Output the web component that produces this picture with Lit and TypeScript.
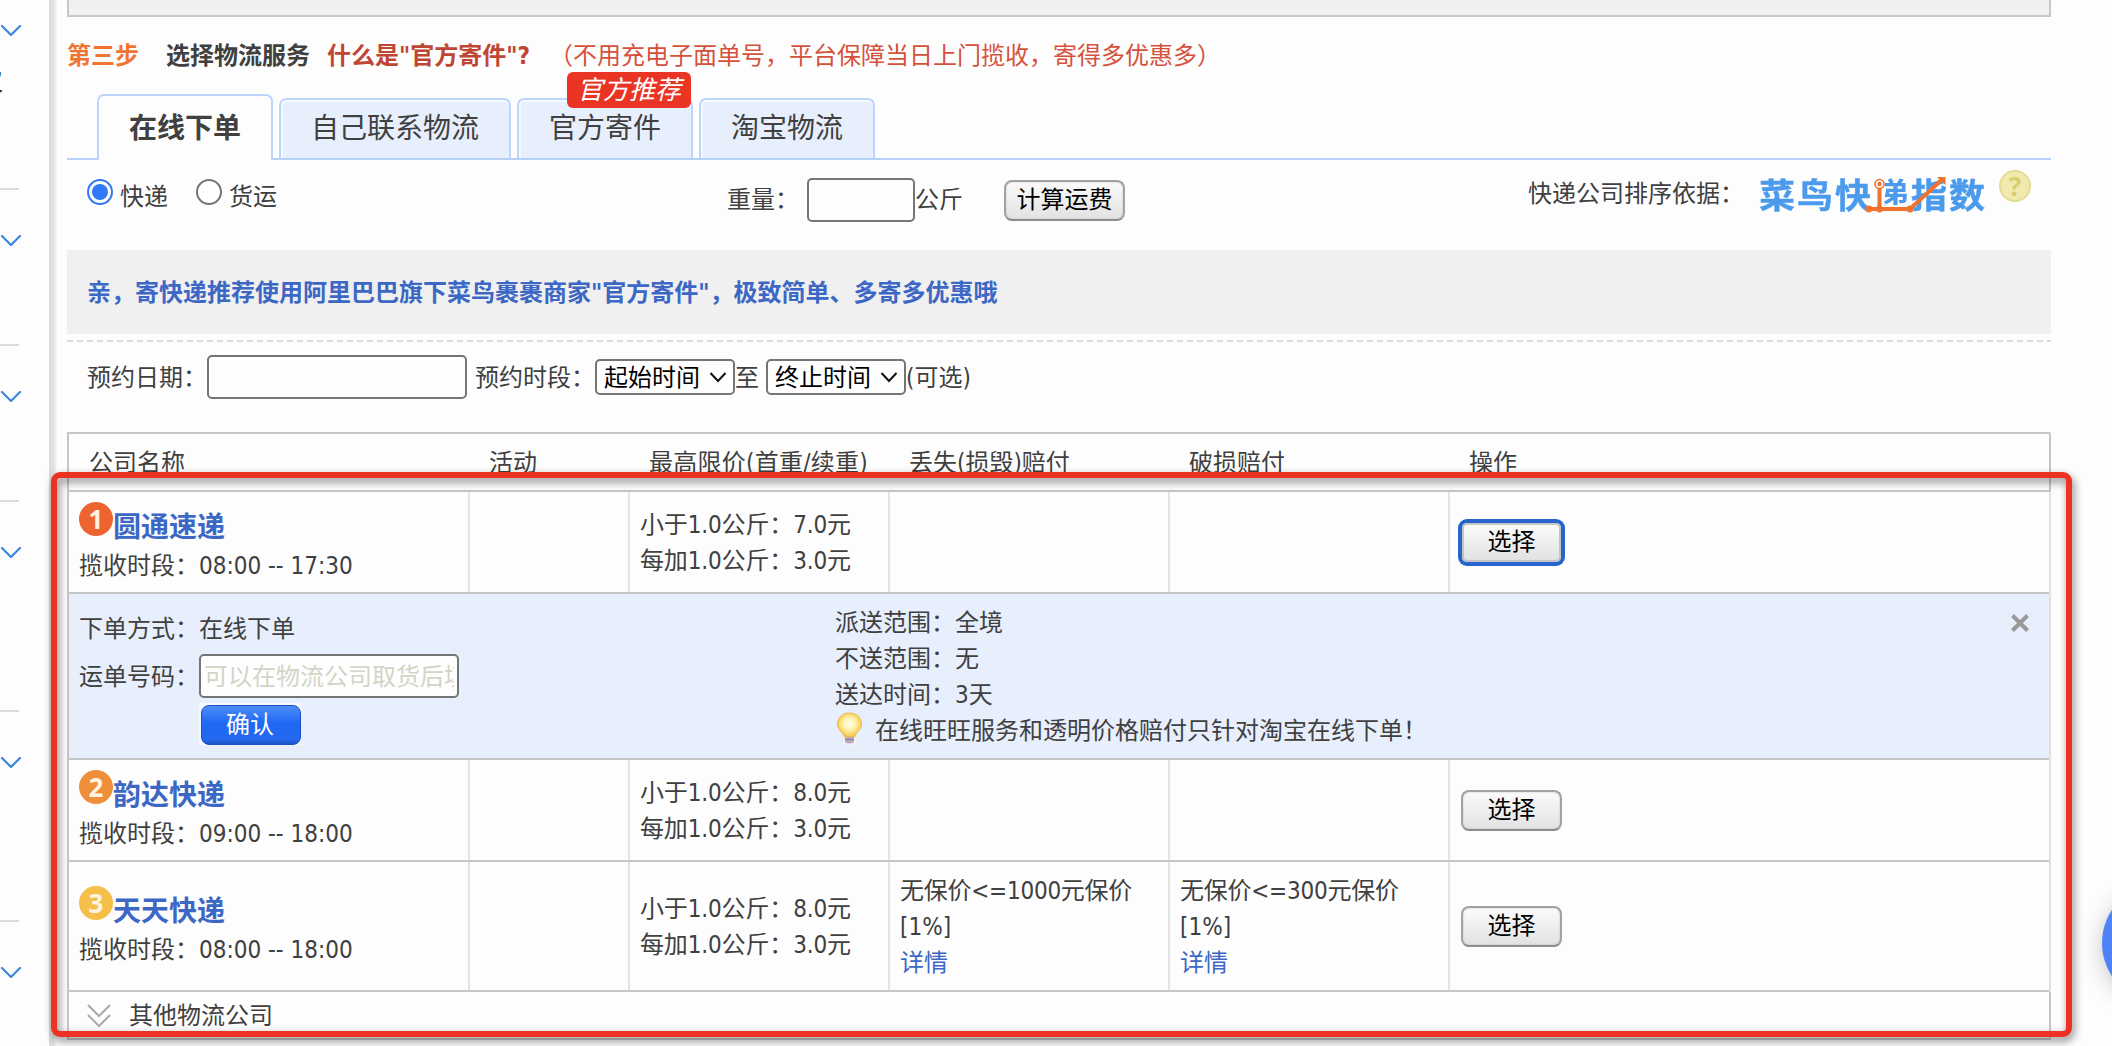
import { LitElement, html, css, svg, nothing } from "lit";
import { customElement, property } from "lit/decorators.js";
import { classMap } from "lit/directives/class-map.js";

interface Carrier {
  rank: number;
  name: string;
  hours: string;
  first: string;
  extra: string;
  lost?: string;
  broken?: string;
  open?: boolean;
}

const CARRIERS: Carrier[] = [
  { rank: 1, name: "圆通速递", hours: "08:00 -- 17:30", first: "7.0", extra: "3.0", open: true },
  { rank: 2, name: "韵达快递", hours: "09:00 -- 18:00", first: "8.0", extra: "3.0" },
  { rank: 3, name: "天天快递", hours: "08:00 -- 18:00", first: "8.0", extra: "3.0", lost: "无保价<=1000元保价", broken: "无保价<=300元保价" },
];

const baseText = css`
  :host {
    font-family: "DejaVu Sans Condensed", "DejaVu Sans", "Noto Sans CJK SC", sans-serif;
    font-stretch: condensed;
    font-size: 24px;
    line-height: 36px;
    color: #404040;
  }
  * { box-sizing: border-box; }
  .btn {
    font: inherit;
    height: 41px;
    line-height: 37px;
    padding: 0;
    color: #000;
    text-align: center;
    border: 2px solid #a2a2a2;
    border-bottom-color: #8c8c8c;
    border-radius: 8px;
    background: linear-gradient(#fbfbfb, #e2e2e2);
    box-shadow: inset 0 0 2px #bbb;
  }
  .field {
    font: inherit;
    height: 44px;
    padding: 2px 3px 0;
    border: 2px solid #757575;
    border-radius: 5px;
    background: #fefefe;
    outline: none;
  }
`;

@customElement("side-menu")
export class SideMenu extends LitElement {
  static styles = [baseText, css`
    :host { display: block; width: 49px; overflow: hidden; }
    .item { width: 19px; border-bottom: 2px solid #dcdcdc; padding-top: 45px; height: 156px; }
    .item.first { height: 190px; padding-top: 25px; }
    .item.tall { height: 210px; }
    .arrow { display: block; width: 22px; height: 11px; }
    .label { display: block; width: 24px; margin: 28px 0 0 -21px; color: #222; }
  `];
  render() {
    return ["first", "", "", "tall", "tall", ""].map((k) => html`
      <div class="item ${k}">
        <svg class="arrow" viewBox="0 0 22 11"><path d="M2 1 L11 10 L20 1" fill="none" stroke="#3b88da" stroke-width="2.2" stroke-linecap="round" stroke-linejoin="round"/></svg>
        ${k === "first" ? html`<span class="label">仅</span>` : nothing}
      </div>`);
  }
}

@customElement("cainiao-index")
export class CainiaoIndex extends LitElement {
  static styles = [baseText, css`
    :host { display: block; }
    .logo { position: relative; display: flex; width: 228px; height: 40px; font-family: "Noto Sans CJK SC", sans-serif; font-weight: 700; font-size: 36px; line-height: 37px; color: #4b9aec; }
    .ch { width: 38px; transform: scaleY(.94); -webkit-text-stroke: 0.5px #4b9aec; }
    .route { position: absolute; left: 0; top: 0; }
    .mix {
      color: transparent; -webkit-text-stroke: 0;
      background: linear-gradient(90deg, transparent 30%, #4b9aec 30%) 0 0 / 100% 31px no-repeat;
      background-clip: text; -webkit-background-clip: text;
    }
  `];
  render() {
    return html`<div class="logo">
      ${[..."菜鸟快递指数"].map((c) => html`<span class=${classMap({ ch: true, mix: c === "递" })}>${c}</span>`)}
      <svg class="route" width="228" height="40" viewBox="0 0 228 40">
        <path d="M110 34 H151 L183 4.500 M120.500 34 V10" fill="none" stroke="#f0722f" stroke-width="4"/>
        <path d="M178 2 h8.500 v8 z" fill="#f0722f"/>
        <circle cx="110" cy="34" r="3.400" fill="#f0722f"/><circle cx="120.500" cy="34" r="3.400" fill="#f0722f"/><circle cx="151" cy="34" r="3.600" fill="#f0722f"/>
        <circle cx="120.500" cy="9" r="4.500" fill="#fdfdfd" stroke="#f0722f" stroke-width="1.600"/><circle cx="120.500" cy="9" r="2.200" fill="#f0722f"/>
      </svg>
    </div>`;
  }
}

@customElement("carrier-detail")
export class CarrierDetail extends LitElement {
  static styles = [baseText, css`
    :host { display: flex; height: 166px; background: #e7eefc; border-bottom: 2px solid #c6c6c6; }
    .left { width: 766px; flex: none; padding: 15px 0 0 10px; }
    .line { display: flex; align-items: center; height: 40px; }
    .line.num { height: 44px; margin-top: 5px; }
    .key { width: 120px; white-space: nowrap; }
    .num .key { padding-top: 1px; }
    .num .field { width: 260px; }
    .field::placeholder { color: #d4d4c6; opacity: 1; }
    .confirm { display: flex; width: 102px; height: 42px; margin: 5px 0 0 120px; padding: 2px 0 0 2px; background: #f7f9fe; }
    .ok { width: 100px; height: 40px; padding: 0 2px 0 0; border: 1px solid #1c50c4; border-radius: 8px; font: inherit; line-height: 36px; color: #fff; background: linear-gradient(#4f8df6, #1f68f4 45%, #2468ee 88%, #1b52c6); }
    .right { flex: 1; padding-top: 11px; }
    .row { display: flex; }
    .tip { display: flex; }
    .bulb { width: 40px; height: 36px; margin-top: -1px; }
    .close { width: 20px; height: 20px; margin: 19px 19px 0 0; }
  `];
  render() {
    return html`
      <div class="left">
        <div class="line"><span class="key">下单方式：</span><span>在线下单</span></div>
        <div class="line num"><span class="key">运单号码：</span><input class="field" placeholder="可以在物流公司取货后填写"></div>
        <div class="confirm"><button class="ok">确认</button></div>
      </div>
      <div class="right">
        <div class="row"><span class="key">派送范围：</span><span>全境</span></div>
        <div class="row"><span class="key">不送范围：</span><span>无</span></div>
        <div class="row"><span class="key">送达时间：</span><span>3天</span></div>
        <div class="tip">
          <svg class="bulb" viewBox="0 0 40 36">
            <defs><radialGradient id="g" cx="50%" cy="45%" r="55%"><stop offset="0" stop-color="#fffef0"/><stop offset=".45" stop-color="#fff3b0"/><stop offset="1" stop-color="#f6c33c"/></radialGradient></defs>
            <path d="M8 24 h13 v8 q-6.500 4 -13 0z" fill="#f3f1f4"/>
            <path d="M14.500 1 C7 1 2.500 6 2.500 12 C2.500 18 8 20 9.500 25 H19.500 C21 20 26.500 18 26.500 12 C26.500 6 22 1 14.500 1z" fill="url(#g)" stroke="#ecb94a" stroke-width="1"/>
            <path d="M10 25 h9 v5 q-4.500 3 -9 0z" fill="#b9a9c4"/><path d="M10 27.500 h9" stroke="#8e7fa6" stroke-width="1.200"/>
          </svg><span>在线旺旺服务和透明价格赔付只针对淘宝在线下单！</span>
        </div>
      </div>
      <svg class="close" viewBox="0 0 20 20"><path d="M2.500 2.500 L17.500 17.500 M17.500 2.500 L2.500 17.500" stroke="#999" stroke-width="4"/></svg>
    `;
  }
}

@customElement("carrier-row")
export class CarrierRow extends LitElement {
  @property({ attribute: false }) data!: Carrier;
  static styles = [baseText, css`
    :host { display: block; }
    .row { display: grid; grid-template-columns: 401px 160px 260px 280px 280px 1fr; min-height: 102px; border-bottom: 2px solid #c6c6c6; }
    .row.tall { min-height: 130px; }
    .cell { display: flex; flex-direction: column; justify-content: center; align-items: flex-start; padding: 2px 0 0 10px; border-right: 2px solid #e4e4e4; }
    .cell.last { border-right: 0; padding-top: 0; }
    .title { display: flex; height: 46px; line-height: 51px; font-size: 28px; font-weight: bold; color: #3d67c5; }
    .rank { width: 34px; height: 34px; border-radius: 50%; color: #fff3e2; font: bold 26px/34px "Noto Sans", sans-serif; text-align: center; }
    .r1 { background: #ee6430; } .r2 { background: #f08f3a; } .r3 { background: #f4c04a; }
    .link { color: #3d67c5; }
    .price { letter-spacing: -0.15px; }
    .cover { letter-spacing: -0.25px; }
    .pick { width: 101px; margin-left: 1px; }
    .pick.focus { width: 99px; height: 39px; margin-left: 2px; border-color: #c4c4c4; box-shadow: 0 0 0 4px #2764cc; border-radius: 5px; line-height: 35px; }
  `];
  private cover(text?: string) {
    return text ? html`<span class="cover">${text}</span><span>[1%]</span><a class="link">详情</a>` : nothing;
  }
  render() {
    const d = this.data;
    return html`<div class=${classMap({ row: true, tall: !!d.lost })}>
      <div class="cell">
        <div class="title"><span class="rank r${d.rank}">${d.rank}</span><span>${d.name}</span></div>
        <span>揽收时段：${d.hours}</span>
      </div>
      <div class="cell"></div>
      <div class="cell"><span class="price">小于1.0公斤：${d.first}元</span><span class="price">每加1.0公斤：${d.extra}元</span></div>
      <div class="cell">${this.cover(d.lost)}</div>
      <div class="cell">${this.cover(d.broken)}</div>
      <div class="cell last"><button class=${classMap({ btn: true, pick: true, focus: !!d.open })}>选择</button></div>
    </div>`;
  }
}

@customElement("app-root")
export class AppRoot extends LitElement {
  static styles = [baseText, css`
    :host { display: block; }
    .page { position: relative; display: flex; height: 1046px; overflow: hidden; background: #fdfdfd; }
    .edge { width: 8px; background: linear-gradient(90deg, #dadada, #e2e2e2 60%, #fafafa); }
    .main { width: 1984px; margin-left: 10px; }
    .topbox { height: 17px; border: 2px solid #c8c8c8; border-top: 0; background: #f0f0f0; }
    .step { display: flex; align-items: center; height: 76px; padding-top: 2px; font-weight: bold; white-space: nowrap; }
    .no { width: 99px; color: #f07432; }
    .what { margin-left: 17px; color: #bf4632; }
    .note { margin-left: 19px; font-weight: normal; color: #d5513c; }
    .tabs { display: flex; align-items: flex-end; gap: 6px; height: 67px; padding-left: 30px; border-bottom: 2px solid #b6d0fa; }
    .tab { position: relative; width: 176px; height: 60px; padding-top: 4px; line-height: 50px; font-size: 28px; text-align: center; white-space: nowrap; background: #e7effd; border: 2px solid #bdd5fb; border-bottom: 0; border-radius: 7px 7px 0 0; box-shadow: inset 0 2px #f4f8ff, inset 2px 0 #f4f8ff; }
    .tab.wide { width: 232px; }
    .tab.on { height: 66px; padding-top: 8px; margin-bottom: -2px; font-weight: bold; background: #fdfdfd; box-shadow: none; }
    .hot { position: absolute; left: 48px; top: -28px; width: 124px; height: 36px; border-radius: 6px; background: #ea3424; color: #fff; font-size: 26px; line-height: 37px; font-style: italic; }
    .filters { display: flex; height: 90px; white-space: nowrap; }
    .ways { display: flex; width: 660px; padding: 18px 0 0 20px; }
    .radio { width: 26px; height: 26px; margin: 1px 7px 0 0; }
    .way { width: 76px; padding-top: 1px; }
    .weight { display: flex; align-items: center; width: 801px; height: 80px; }
    .wlabel { width: 80px; }
    .kg { width: 108px; }
    .unit { width: 89px; }
    .calc { width: 121px; }
    .basis { width: 231px; padding-top: 16px; }
    .logo { margin-top: 15px; }
    .help { width: 32px; height: 32px; margin: 10px 0 0 12px; border-radius: 50%; border: 2px solid #e4db92; background: #f0eaae; color: #d9cd72; font: bold 26px/28px "Noto Sans", sans-serif; text-align: center; }
    .promo { height: 84px; padding-left: 20px; line-height: 86px; font-weight: bold; color: #3d67c5; background: #f0f0f0; }
    .dash { height: 2px; margin-top: 6px; background: repeating-linear-gradient(90deg, #dcdcdc 0 6px, transparent 6px 10px); }
    .booking { display: flex; align-items: center; height: 70px; margin-bottom: 20px; padding-left: 20px; white-space: nowrap; }
    .txt { padding-top: 2px; }
    .date { width: 260px; margin-right: 8px; }
    .pickbox { display: flex; align-items: center; width: 140px; height: 36px; border: 2px solid #757575; border-radius: 5px; background: #fefefe; }
    .sel { appearance: none; width: 112px; height: 32px; padding: 1px 0 0 7px; border: 0; background: none; font: inherit; line-height: 32px; color: #000; }
    .caret { width: 18px; height: 12px; }
    .to { width: 31px; }
    .table { border: 2px solid #c6c6c6; border-right-color: #e0e0e0; height: 608px; }
    .head { display: grid; grid-template-columns: 400px 160px 260px 280px 280px 1fr; align-items: center; height: 58px; padding: 2px 0 0 20px; margin-right: -2px; border-bottom: 2px solid #c6c6c6; border-right: 2px solid #c6c6c6; white-space: nowrap; }
    .limit { letter-spacing: 0.25px; }
    .more { display: flex; align-items: center; height: 46px; padding: 2px 0 0 18px; margin-right: -2px; border-right: 2px solid #c6c6c6; }
    .down { width: 24px; height: 24px; margin-right: 18px; }
    .frame { position: absolute; left: 51px; top: 472px; width: 2021px; height: 565px; border: 6px solid #ec3323; border-radius: 9px; filter: drop-shadow(2px 4px 4px rgba(0,0,0,.5)); pointer-events: none; }
    .bubble { position: absolute; left: 2102px; top: 883px; width: 120px; height: 120px; border-radius: 50%; background: #4f82f7; box-shadow: 0 4px 22px rgba(0,0,0,.22); }
  `];

  private radio(on: boolean) {
    return html`<svg class="radio" viewBox="0 0 26 26">
      <circle cx="13" cy="13" r="12" fill="#fff" stroke=${on ? "#3078f6" : "#757575"} stroke-width="2"/>
      ${on ? svg`<circle cx="13" cy="13" r="8" fill="#3078f6"/>` : nothing}
    </svg>`;
  }
  private select(label: string) {
    return html`<div class="pickbox"><select class="sel"><option>${label}</option></select>
      <svg class="caret" viewBox="0 0 18 12"><path d="M1.500 2 L9 10 L16.500 2" fill="none" stroke="#111" stroke-width="2"/></svg></div>`;
  }

  render() {
    return html`<div class="page">
      <side-menu></side-menu>
      <div class="edge"></div>
      <div class="main">
        <div class="topbox"></div>
        <div class="step">
          <span class="no">第三步</span><span>选择物流服务</span>
          <span class="what">什么是"官方寄件"?</span>
          <span class="note">（不用充电子面单号，平台保障当日上门揽收，寄得多优惠多）</span>
        </div>
        <div class="tabs">
          <div class="tab on">在线下单</div>
          <div class="tab wide">自己联系物流</div>
          <div class="tab">官方寄件<span class="hot">官方推荐</span></div>
          <div class="tab">淘宝物流</div>
        </div>
        <div class="filters">
          <div class="ways">${this.radio(true)}<span class="way">快递</span>${this.radio(false)}<span class="way">货运</span></div>
          <div class="weight"><span class="wlabel">重量：</span><input class="field kg"><span class="unit">公斤</span><button class="btn calc">计算运费</button></div>
          <span class="basis">快递公司排序依据：</span>
          <cainiao-index class="logo"></cainiao-index>
          <span class="help">?</span>
        </div>
        <div class="promo">亲，寄快递推荐使用阿里巴巴旗下菜鸟裹裹商家"官方寄件"，极致简单、多寄多优惠哦</div>
        <div class="dash"></div>
        <div class="booking">
          <span class="txt">预约日期：</span><input class="field date"><span class="txt">预约时段：</span>
          ${this.select("起始时间")}<span class="txt to">至</span>${this.select("终止时间")}<span class="txt">(可选)</span>
        </div>
        <div class="table">
          <div class="head"><span>公司名称</span><span>活动</span><span class="limit">最高限价(首重/续重)</span><span>丢失(损毁)赔付</span><span>破损赔付</span><span>操作</span></div>
          ${CARRIERS.map((c) => html`<carrier-row .data=${c}></carrier-row>${c.open ? html`<carrier-detail></carrier-detail>` : nothing}`)}
          <div class="more">
            <svg class="down" viewBox="0 0 24 24"><path d="M1 1 L12 12 L23 1 M1 11 L12 22 L23 11" fill="none" stroke="#aaa" stroke-width="2"/></svg>
            <span>其他物流公司</span>
          </div>
        </div>
      </div>
      <div class="frame"></div>
      <div class="bubble"></div>
    </div>`;
  }
}
